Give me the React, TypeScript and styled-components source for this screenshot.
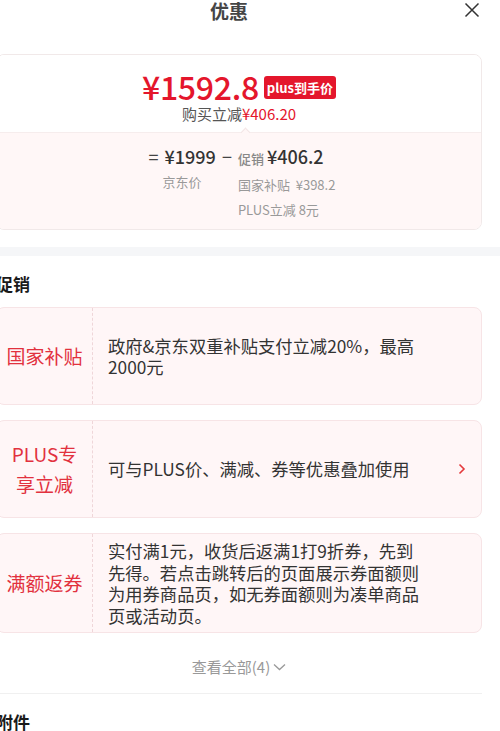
import React from 'react'
import styled, { createGlobalStyle } from 'styled-components'

const GlobalStyle = createGlobalStyle`
  html, body {
    margin: 0;
    padding: 0;
    overflow: hidden;
    background: #fff;
  }
  body {
    font-family: "Noto Sans CJK SC", "Noto Sans", sans-serif;
    color: #333;
  }
`

const Sheet = styled.div`
  width: 522px;
  margin-left: -22px;
  background: #fff;
`

const Header = styled.div`
  display: grid;
  grid-template-columns: 1fr auto 1fr;
  align-items: center;
  height: 22px;
  padding-right: 20px;
`

const Title = styled.div`
  grid-column: 2;
  font-size: 19px;
  font-weight: 700;
  color: #454545;
  line-height: 22px;
`

const CloseButton = styled.div`
  justify-self: end;
  display: flex;
  align-items: center;
  margin-top: -2px;
`

const PriceCard = styled.div`
  margin: 32px 18px 0;
  border: 1px solid #f1e9e9;
  border-radius: 8px;
  overflow: hidden;
`

const PriceTop = styled.div`
  padding: 13px 0 8px;
  display: flex;
  flex-direction: column;
  align-items: center;
  background: #fff;
`

const PriceLine = styled.div`
  display: flex;
  align-items: center;
  gap: 5px;
  height: 36px;
`

const BigPrice = styled.span`
  font-size: 32px;
  font-weight: 500;
  color: #e4162c;
  line-height: 36px;
  letter-spacing: -0.3px;
`

const Badge = styled.span`
  background: #e4162c;
  color: #fff;
  font-size: 13px;
  font-weight: 700;
  height: 23px;
  line-height: 23px;
  padding: 0 3px;
  border-radius: 3px;
  margin-top: 2px;
`

const SaveLine = styled.div`
  font-size: 15px;
  line-height: 20px;
  color: #555;
`

const Red = styled.span`
  color: #e4162c;
`

const Breakdown = styled.div`
  position: relative;
  background: #fff7f7;
  border-top: 1px solid #f6eded;
  padding: 10px 0 7px;
  display: flex;
  justify-content: center;
  align-items: flex-start;

  &::before {
    content: '';
    position: absolute;
    top: -4px;
    left: calc(50% + 3px);
    width: 6px;
    height: 6px;
    background: #fff7f7;
    border-top: 1px solid #f3e6e6;
    border-left: 1px solid #f3e6e6;
    transform: rotate(45deg);
  }
`

const Op = styled.span`
  font-size: 18px;
  line-height: 26px;
  color: #444;
  margin: 0 6px;
`

const Column = styled.div`
  display: flex;
  flex-direction: column;
`

const MainAmount = styled.div`
  font-size: 18px;
  font-weight: 500;
  line-height: 26px;
  color: #333;
`

const SmallLabel = styled.span`
  font-size: 13px;
  color: #888;
  margin-right: 3px;
`

const SubLine = styled.div`
  font-size: 13px;
  line-height: 25px;
  color: #999;
  margin-left: ${(p: { $indent?: number }) => p.$indent || 0}px;
  white-space: pre;
`

const GreyBand = styled.div`
  height: 9px;
  background: #f5f6f8;
  margin-top: 17px;
`

const Section = styled.div`
  padding: 0 18px;
`

const SectionTitle = styled.div`
  font-size: 17px;
  font-weight: 700;
  color: #1a1a1a;
  line-height: 24px;
  padding-top: 16px;
  margin-bottom: 11px;
`

const PromoList = styled.div`
  display: flex;
  flex-direction: column;
  gap: 15px;
`

const PromoCard = styled.div`
  display: flex;
  min-height: 98px;
  background: #fff6f7;
  border: 1px solid #f7e4e6;
  border-radius: 8px;
  box-sizing: border-box;
`

const PromoLabel = styled.div`
  width: 95px;
  flex-shrink: 0;
  border-right: 1px dashed #efd6d9;
  display: flex;
  align-items: center;
  justify-content: center;
  text-align: center;
  font-size: 19px;
  line-height: 30px;
  color: #e2313e;
`

const PromoText = styled.div`
  flex: 1;
  display: flex;
  align-items: center;
  padding: 6px 0 6px 15px;
  font-size: 17.3px;
  line-height: 21.5px;
  color: #333;
`

const Arrow = styled.div`
  display: flex;
  align-items: center;
  padding-right: 15px;
`

const ViewAll = styled.div`
  display: flex;
  justify-content: center;
  align-items: center;
  gap: 3px;
  padding: 23px 0 15px;
  font-size: 15px;
  line-height: 22px;
  color: #999;
`

const Divider = styled.div`
  border-top: 1px solid #f0f0f0;
`

const promos = [
  { label: ['国家补贴'], lines: ['政府&京东双重补贴支付立减20%，最高', '2000元'] },
  { label: ['PLUS专', '享立减'], lines: ['可与PLUS价、满减、券等优惠叠加使用'], arrow: true },
  {
    label: ['满额返券'],
    lines: [
      '实付满1元，收货后返满1打9折券，先到',
      '先得。若点击跳转后的页面展示券面额则',
      '为用券商品页，如无券面额则为凑单商品',
      '页或活动页。',
    ],
  },
]

const App = () => {
  return (
    <>
      <GlobalStyle />
      <Sheet>
        <Header>
          <Title>优惠</Title>
          <CloseButton>
            <svg width="16" height="16" viewBox="0 0 16 16">
              <path d="M1.5 1.5 14.5 14.5M14.5 1.5 1.5 14.5" stroke="#333" strokeWidth="1.5" fill="none" />
            </svg>
          </CloseButton>
        </Header>

        <PriceCard>
          <PriceTop>
            <PriceLine>
              <BigPrice>¥1592.8</BigPrice>
              <Badge>plus到手价</Badge>
            </PriceLine>
            <SaveLine>
              购买立减<Red>¥406.20</Red>
            </SaveLine>
          </PriceTop>
          <Breakdown>
            <Op>=</Op>
            <Column>
              <MainAmount>¥1999</MainAmount>
              <SubLine $indent={-2}>京东价</SubLine>
            </Column>
            <Op>−</Op>
            <Column>
              <MainAmount>
                <SmallLabel>促销</SmallLabel>¥406.2
              </MainAmount>
              <SubLine>国家补贴  ¥398.2</SubLine>
              <SubLine>PLUS立减 8元</SubLine>
            </Column>
          </Breakdown>
        </PriceCard>

        <GreyBand />

        <Section>
          <SectionTitle>促销</SectionTitle>
          <PromoList>
            {promos.map((p, i) => (
              <PromoCard key={i}>
                <PromoLabel>
                  <div>
                    {p.label.map((l) => (
                      <div key={l}>{l}</div>
                    ))}
                  </div>
                </PromoLabel>
                <PromoText>
                  <div>
                    {p.lines.map((l) => (
                      <div key={l}>{l}</div>
                    ))}
                  </div>
                </PromoText>
                {p.arrow && (
                  <Arrow>
                    <svg width="8" height="12" viewBox="0 0 8 12">
                      <path d="M1.5 1.5 6 6 1.5 10.5" stroke="#e4393c" strokeWidth="1.6" fill="none" />
                    </svg>
                  </Arrow>
                )}
              </PromoCard>
            ))}
          </PromoList>
          <ViewAll>
            查看全部(4)
            <svg width="13" height="8" viewBox="0 0 13 8">
              <path d="M1 1.5 6.5 6.5 12 1.5" stroke="#999" strokeWidth="1.3" fill="none" />
            </svg>
          </ViewAll>
          <Divider />
          <SectionTitle>附件</SectionTitle>
        </Section>
      </Sheet>
    </>
  )
}

export default App
